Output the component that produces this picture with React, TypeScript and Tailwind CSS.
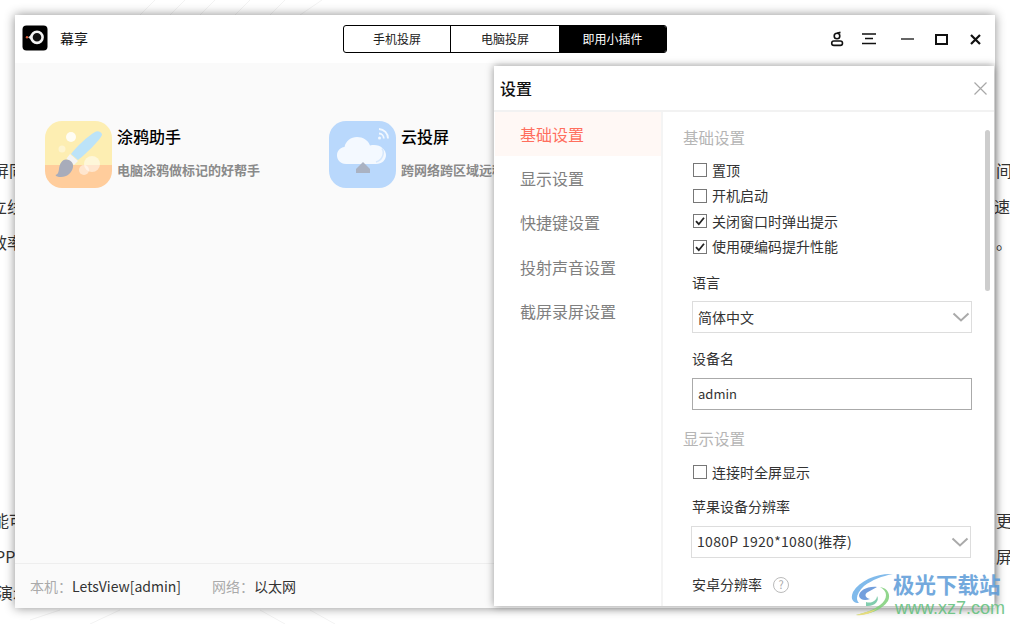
import React from "react";

function Logo() {
  return (
    <svg width="26" height="26" viewBox="0 0 26 26" className="mb-[2px] shrink-0">
      <rect x="0.5" y="0.5" width="25" height="25" rx="4" fill="#000" />
      <path d="M10 9.500 L6 12.200 L10 15.500 Z" fill="#ddd" />
      <circle cx="15" cy="12.300" r="5.600" fill="#111" stroke="#f4f4f4" strokeWidth="2.600" />
      <circle cx="5" cy="12.300" r="1.200" fill="#e0603c" />
    </svg>
  );
}

function BrushIcon() {
  return (
    <svg width="67" height="67" viewBox="0 0 67 67" className="shrink-0">
      <defs>
        <clipPath id="brushClip">
          <rect width="67" height="67" rx="17" />
        </clipPath>
      </defs>
      <g clipPath="url(#brushClip)">
        <rect width="67" height="44" fill="#fdeeb2" />
        <rect y="44" width="67" height="23" fill="#ffcd9c" />
        <circle cx="26" cy="16" r="5" fill="#fff" opacity="0.85" />
        <circle cx="17" cy="28" r="3.5" fill="#fff" opacity="0.4" />
        <circle cx="47" cy="43" r="8" fill="#fff" opacity="0.5" />
        <circle cx="39" cy="49" r="5" fill="#fff" opacity="0.5" />
        <path d="M50 11 C52 9.5 57 10.5 57 14 C55 19 41 33 33 39 L26 33 C31 26 43 15 50 11 Z" fill="#bce3f8" />
        <path d="M25 33 L33 40 L29 44 L21.500 37.500 Z" fill="#f4f4f4" />
        <path d="M21 38.500 C25 38.500 29 42 28 46 C27 52 22 56 16 56 C13 56 11 55.500 10.500 54 C13 53.500 13.500 51 14 48 C14.500 43 17 38.500 21 38.500 Z" fill="#a8acba" />
      </g>
    </svg>
  );
}

function CloudIcon() {
  return (
    <svg width="67" height="67" viewBox="0 0 67 67" className="shrink-0">
      <rect width="67" height="67" rx="17" fill="#b9d8fc" />
      <path d="M50 8 a9.500 9.500 0 0 1 9 9.500" stroke="#f2f8ff" strokeWidth="1.800" fill="none" />
      <path d="M50 12.500 a5 5 0 0 1 4.800 5" stroke="#f2f8ff" strokeWidth="1.800" fill="none" />
      <circle cx="50.500" cy="17" r="1.500" fill="#f2f8ff" />
      <path d="M17 43 C11 43 8 38.500 8 34.500 C8 30 11 26.500 15.500 26 C16.500 20 22 16 28 16 C34 16 39 19 41 24.500 C42.500 24 43.500 24 45 24 C52 24 57 29 57 34 C57 39 53 43 47 43 Z" fill="#f4f9ff" />
      <path d="M53 27.500 C56 32 53.500 39 47 41" stroke="#d6e8fd" strokeWidth="1.500" fill="none" />
      <path d="M34 41 L41 48 L41 52 L27 52 L27 48 Z" fill="#aab2c2" />
    </svg>
  );
}

function Card({ title, sub, icon, width }: { title: string; sub: string; icon: React.ReactNode; width: string }) {
  return (
    <div className={`flex gap-[5px] ${width}`}>
      {icon}
      <div className="flex min-w-0 flex-col whitespace-nowrap">
        <div className="mt-[3px] h-[24px] text-[16px] font-medium leading-[24px] text-black">{title}</div>
        <div className="mt-[12px] h-[20px] text-[13px] font-bold leading-[20px] text-[#8a8a8a]">{sub}</div>
      </div>
    </div>
  );
}

function Check({ label, checked }: { label: string; checked?: boolean }) {
  return (
    <div className="ml-[10px] flex h-[25.5px] items-center gap-[5px]">
      <div className="mt-[1px] flex h-[14px] w-[14px] items-center justify-center border border-[#777] bg-white">
        {checked && (
          <svg width="12" height="12" viewBox="0 0 12 12">
            <path d="M2 6.200 L4.800 9.200 L10 2.800" stroke="#222" strokeWidth="1.800" fill="none" />
          </svg>
        )}
      </div>
      <span className="text-[14px] leading-[20px] text-[#333]">{label}</span>
    </div>
  );
}

function Select({ value, wide }: { value: string; wide?: boolean }) {
  return (
    <div className="ml-[9px] flex h-[32px] w-[280px] items-center justify-between border border-[#ddd] bg-white pl-[5px] pr-[1px] text-[14px] text-[#333]">
      <span className={wide ? "tracking-[0.3px]" : ""}>{value}</span>
      <svg width="18" height="10" viewBox="0 0 18 10">
        <path d="M1.500 1.500 L9 8.500 L16.500 1.500" stroke="#aaa" strokeWidth="2" fill="none" />
      </svg>
    </div>
  );
}

function BackRow({ children, offset }: { children: string; offset?: string }) {
  return <div className={`h-[36px] whitespace-nowrap ${offset ?? ""}`}>{children}</div>;
}

export default function App() {
  const nav = ["显示设置", "快捷键设置", "投射声音设置", "截屏录屏设置"];
  return (
    <div className="relative h-[624px] w-[1010px] overflow-hidden bg-white font-['Noto_Sans_CJK_SC',sans-serif]">
      {/* page behind the window */}
      <svg width="1010" height="624" viewBox="0 0 1010 624" className="absolute left-0 top-0">
        <g stroke="#f3f3f3" strokeWidth="1">
          <path d="M140 15 L155 0 M170 15 L185 0 M200 15 L215 0 M235 15 L250 0 M270 15 L285 0 M300 15 L322 0" />
          <path d="M260 610 L285 624 M310 610 L335 624 M30 620 L60 610 M90 624 L120 610" />
        </g>
      </svg>
      <div className="absolute inset-0 flex justify-between text-[16px] leading-[36px] text-[#333]">
        <div className="w-[15px] overflow-hidden">
          <div className="mt-[152px]">
            <BackRow offset="-ml-[7px]">屏同</BackRow>
            <BackRow offset="-ml-[9px]">立线</BackRow>
            <BackRow offset="-ml-[9px]">效率</BackRow>
          </div>
          <div className="mt-[242px]">
            <BackRow offset="-ml-[7px]">能可</BackRow>
            <BackRow offset="-ml-[5px]">PP</BackRow>
            <BackRow offset="-ml-[3px]">演示</BackRow>
          </div>
        </div>
        <div className="w-[15px] overflow-hidden pl-[1px]">
          <div className="mt-[152px]">
            <BackRow>间</BackRow>
            <BackRow offset="-ml-[2px]">速</BackRow>
            <BackRow>。</BackRow>
          </div>
          <div className="mt-[242px]">
            <BackRow>更</BackRow>
            <BackRow>屏</BackRow>
          </div>
        </div>
      </div>

      {/* main window */}
      <div className="absolute left-[15px] top-[15px] flex h-[593px] w-[980px] flex-col bg-white shadow-[0_0_10px_rgba(0,0,0,0.45)]">
        <div className="relative flex h-[48px] shrink-0 items-center pl-[7px]">
          <Logo />
          <span className="mb-[2px] ml-[12px] text-[14px] text-[#111]">幕享</span>
          <div className="absolute left-[328px] top-[10px] flex h-[28px] w-[324px] overflow-hidden rounded-[3px] border border-black text-[12px] leading-[26px]">
            <div className="w-[107px] border-r border-black text-center text-[#222]">手机投屏</div>
            <div className="w-[108px] text-center text-[#222]">电脑投屏</div>
            <div className="flex-1 bg-black text-center text-white">即用小插件</div>
          </div>
          <div className="ml-auto mr-[14px] flex items-center">
            <svg width="16" height="16" viewBox="0 0 16 16" className="mr-[17px]">
              <circle cx="8" cy="5" r="2.800" stroke="#111" strokeWidth="1.600" fill="none" />
              <path d="M8 2.200 L11.500 1.400" stroke="#111" strokeWidth="1.600" />
              <rect x="2.700" y="10" width="10.800" height="4.400" rx="2.200" stroke="#111" strokeWidth="1.600" fill="none" />
            </svg>
            <svg width="14" height="12" viewBox="0 0 14 12" className="mr-[25px]">
              <path d="M0 1 H14 M3 5.500 H11 M0 10.500 H14" stroke="#111" strokeWidth="1.600" />
            </svg>
            <svg width="13" height="12" viewBox="0 0 13 12" className="mr-[21px]">
              <path d="M0 6 H13" stroke="#111" strokeWidth="1.300" />
            </svg>
            <svg width="13" height="11" viewBox="0 0 13 11" className="mr-[22px]">
              <rect x="1" y="1" width="11" height="9" stroke="#111" strokeWidth="2" fill="none" />
            </svg>
            <svg width="11" height="11" viewBox="0 0 11 11">
              <path d="M1 1 L10 10 M10 1 L1 10" stroke="#111" strokeWidth="2.200" />
            </svg>
          </div>
        </div>
        <div className="flex flex-1 items-start gap-0 bg-[#fafafa] pl-[30px] pt-[58px]">
          <Card width="w-[284px]" title="涂鸦助手" sub="电脑涂鸦做标记的好帮手" icon={<BrushIcon />} />
          <Card width="w-[284px]" title="云投屏" sub="跨网络跨区域远程投屏" icon={<CloudIcon />} />
        </div>
        <div className="flex h-[45px] shrink-0 items-center border-t border-[#eee] bg-[#fafafa] pl-[15px] text-[14px]">
          <span className="text-[#aaa]">本机：</span>
          <span className="text-[#333]">LetsView[admin]</span>
          <span className="ml-[31px] text-[#aaa]">网络：</span>
          <span className="text-[#333]">以太网</span>
        </div>
      </div>

      {/* settings dialog */}
      <div className="absolute left-[494px] top-[66px] flex h-[540px] w-[500px] flex-col overflow-hidden bg-white shadow-[0_0_8px_rgba(0,0,0,0.4)]">
        <div className="flex h-[46px] shrink-0 items-center justify-between border-b-2 border-[#f2f2f2] pl-[6px] pr-[7px]">
          <span className="text-[16px] font-medium text-[#111]">设置</span>
          <svg width="13" height="13" viewBox="0 0 13 13">
            <path d="M0.500 0.500 L12.500 12.500 M12.500 0.500 L0.500 12.500" stroke="#a8a8a8" strokeWidth="1.200" />
          </svg>
        </div>
        <div className="flex min-h-0 flex-1">
          <div className="w-[169px] shrink-0 border-r-2 border-[#f4f4f4] pl-px">
            <div className="flex h-[44px] items-center bg-[#fff8f5] pb-[1px] pl-[25px] text-[16px] text-[#ff6f5e]">基础设置</div>
            {nav.map((n) => (
              <div key={n} className="flex h-[44.5px] items-center pb-[1px] pl-[25px] text-[16px] text-[#808080]">
                {n}
              </div>
            ))}
          </div>
          <div className="relative min-w-0 flex-1 overflow-hidden pl-[20px] pt-[12px]">
            <div className="absolute left-[322px] top-[18px] h-[161px] w-[5px] rounded-full bg-[#cdcdcd]" />
            <div className="h-[26px] text-[15.5px] leading-[26px] text-[#b5b5b5]">基础设置</div>
            <div className="mt-[7px]">
              <Check label="置顶" />
              <Check label="开机启动" />
              <Check label="关闭窗口时弹出提示" checked />
              <Check label="使用硬编码提升性能" checked />
            </div>
            <div className="ml-[9px] mt-[13px] h-[20px] text-[14px] leading-[20px] text-[#333]">语言</div>
            <div className="mt-[9px]">
              <Select value="简体中文" />
            </div>
            <div className="ml-[9px] mt-[15px] h-[20px] text-[14px] leading-[20px] text-[#333]">设备名</div>
            <div className="ml-[9px] mt-[10px] flex h-[32px] w-[280px] items-center border border-[#aaa] pl-[5px] text-[13px] text-[#333]">
              admin
            </div>
            <div className="mt-[15px] h-[26px] text-[15.5px] leading-[26px] text-[#b5b5b5]">显示设置</div>
            <div className="mt-[8px]">
              <Check label="连接时全屏显示" />
            </div>
            <div className="ml-[9px] mt-[11px] h-[20px] text-[14px] leading-[20px] text-[#333]">苹果设备分辨率</div>
            <div className="-ml-px mt-[10px]">
              <Select value="1080P 1920*1080(推荐)" wide />
            </div>
            <div className="ml-[9px] mt-[17px] flex h-[20px] items-center gap-[11px] text-[14px] text-[#333]">
              <span>安卓分辨率</span>
              <span className="flex h-[16px] w-[16px] items-center justify-center rounded-full border border-[#bbb] text-[11px] text-[#aaa]">?</span>
            </div>
          </div>
        </div>
      </div>

      {/* watermark */}
      <div className="absolute left-[850px] top-[572px] flex opacity-85">
        <svg width="46" height="46" viewBox="0 0 46 46" className="shrink-0">
          <path d="M43 2 C28 1 10 8 3 20 C0 27 3 31 9 31 C5 27 7 21 14 14 C22 8 32 4 43 2 Z" fill="#6aaee8" />
          <path d="M27 15 C17 14 9 19 9 24 C10 28 15 29 20 27 C15 26 14 22 18 20 C21 18 24 17 27 15 Z" fill="#5b8fd8" />
          <path d="M30 15 C38 19 38 27 30 33 C23 38 15 41 6 43 C18 43 32 38 38 29 C41 23 38 16 30 15 Z" fill="#7fd07a" />
          <path d="M16 30 C22 32 27 28 27 24 C30 28 25 35 16 34 Z" fill="#6cc5a0" />
          <path d="M6 43 C12 44 20 42 27 37 C20 39 13 41 6 43 Z" fill="#e8d96a" />
        </svg>
        <div className="-ml-[3px] -mt-[1px] whitespace-nowrap">
          <div className="h-[26px] text-[21.5px] font-bold leading-[26px] text-[#5b9bd8]">极光下载站</div>
          <div className="ml-[2px] h-[22px] font-['Liberation_Sans',sans-serif] text-[18px] leading-[22px] text-[#5fbf7a]">www.xz7.com</div>
        </div>
      </div>
    </div>
  );
}
